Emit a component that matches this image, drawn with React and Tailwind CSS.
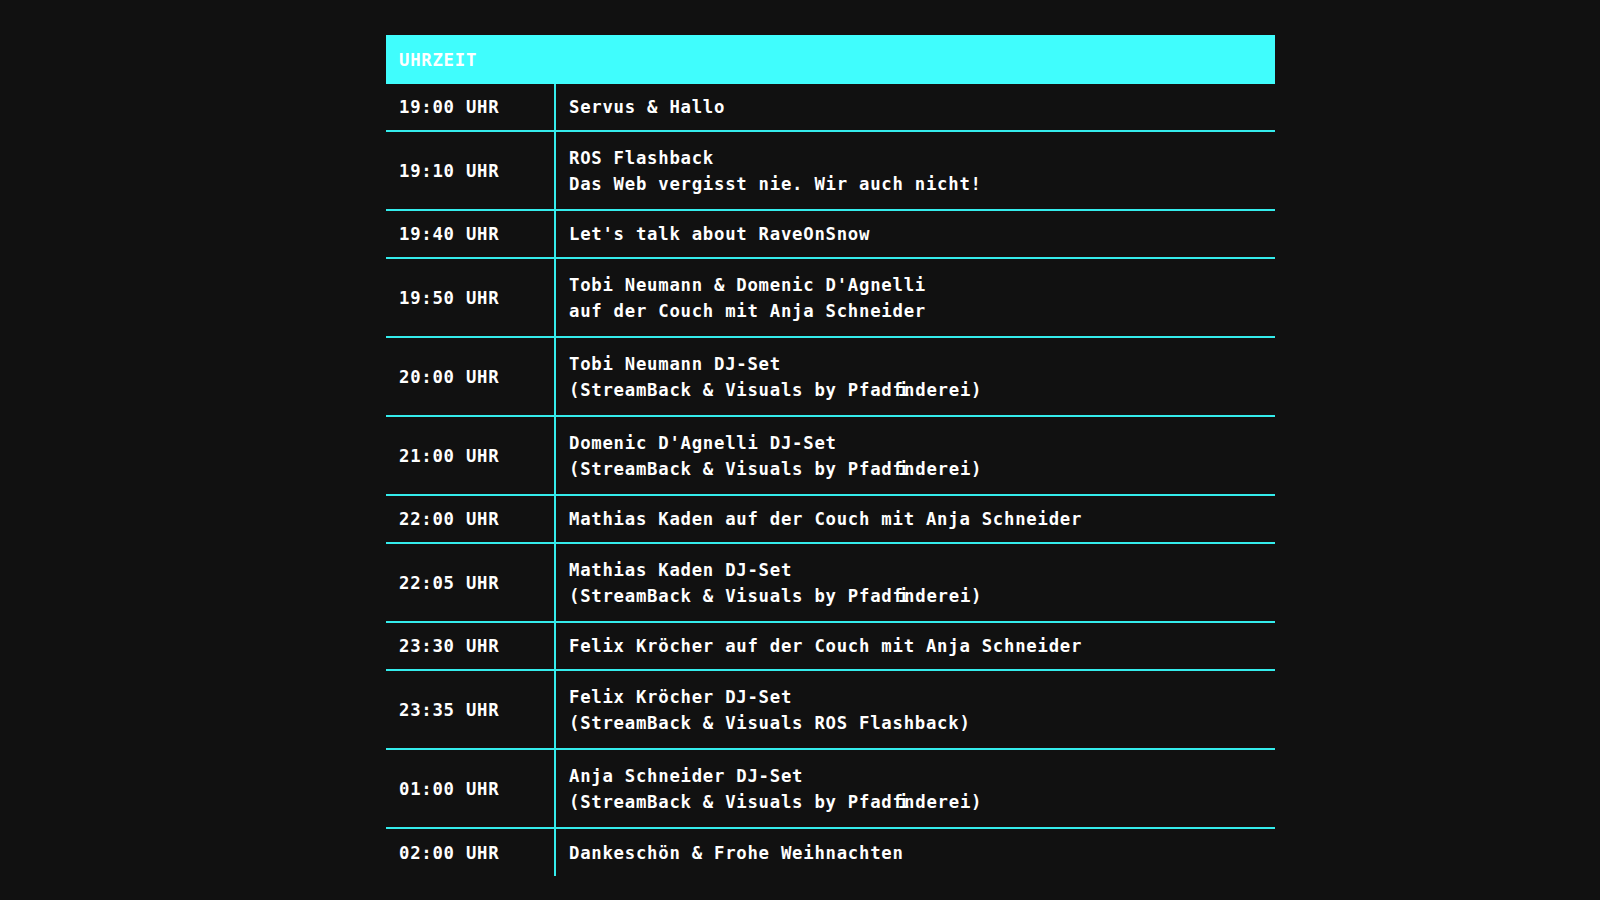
const rows = [
  ["19:00 UHR", ["Servus & Hallo"]],
  ["19:10 UHR", ["ROS Flashback", "Das Web vergisst nie. Wir auch nicht!"]],
  ["19:40 UHR", ["Let's talk about RaveOnSnow"]],
  ["19:50 UHR", ["Tobi Neumann & Domenic D'Agnelli", "auf der Couch mit Anja Schneider"]],
  ["20:00 UHR", ["Tobi Neumann DJ-Set", "(StreamBack & Visuals by Pfadfinderei)"]],
  ["21:00 UHR", ["Domenic D'Agnelli DJ-Set", "(StreamBack & Visuals by Pfadfinderei)"]],
  ["22:00 UHR", ["Mathias Kaden auf der Couch mit Anja Schneider"]],
  ["22:05 UHR", ["Mathias Kaden DJ-Set", "(StreamBack & Visuals by Pfadfinderei)"]],
  ["23:30 UHR", ["Felix Kröcher auf der Couch mit Anja Schneider"]],
  ["23:35 UHR", ["Felix Kröcher DJ-Set", "(StreamBack & Visuals ROS Flashback)"]],
  ["01:00 UHR", ["Anja Schneider DJ-Set", "(StreamBack & Visuals by Pfadfinderei)"]],
  ["02:00 UHR", ["Dankeschön & Frohe Weihnachten"]],
];

function Line({ text }) {
  const parts = text.split("fi");
  return (
    <div className="whitespace-pre">
      {parts.map((p, k) => (
        <span key={k}>
          {p}
          {k < parts.length - 1 && (
            <>
              <span className="tracking-[-4.6px]">f</span>
              <span className="tracking-[-4.6px]">i</span>
            </>
          )}
        </span>
      ))}
    </div>
  );
}

export default function App() {
  return (
    <div
      className="w-[1600px] h-[900px] bg-[#111111] text-white overflow-hidden"
      style={{ fontFamily: '"DejaVu Sans Mono", "Liberation Mono", monospace' }}
    >
      <div className="ml-[386px] pt-[35px] w-[889px] text-[17.3px] font-bold leading-[26px] tracking-[0.75px]">
        <div className="h-[49px] bg-[#40fdfd] flex items-center px-[13px]">
          <span className="text-white">UHRZEIT</span>
        </div>
        {rows.map(([time, lines], i) => {
          const last = i === rows.length - 1;
          const tall = lines.length > 1;
          return (
            <div
              key={i}
              className={
                "flex " +
                (last ? "h-[47px]" : "border-b-2 border-[#34ecec] " + (tall ? "h-[79px]" : "h-[48px]"))
              }
            >
              <div className="w-[170px] shrink-0 flex items-center px-[13px] border-r-2 border-[#34ecec]">
                {time}
              </div>
              <div className="flex-1 flex flex-col justify-center px-[13px]">
                {lines.map((l, j) => (
                  <Line key={j} text={l} />
                ))}
              </div>
            </div>
          );
        })}
      </div>
    </div>
  );
}
